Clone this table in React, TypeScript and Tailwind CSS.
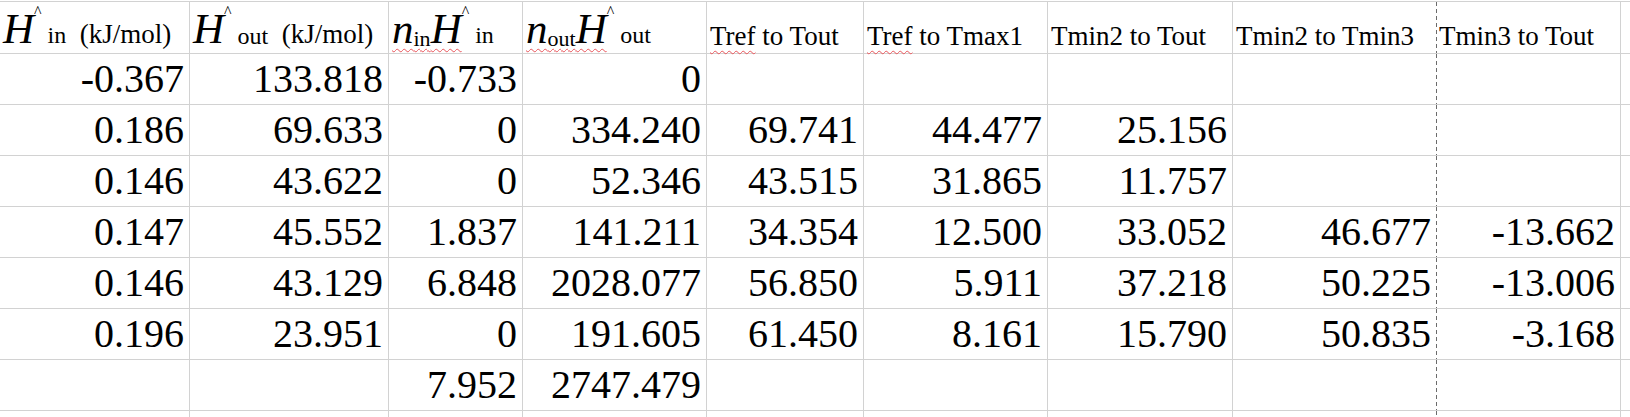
import React from "react";

const widths = [
  "w-[190px]",
  "w-[199px]",
  "w-[134px]",
  "w-[184px]",
  "w-[157px]",
  "w-[184px]",
  "w-[185px]",
  "w-[203px]",
  "w-[185px]",
];

const borderFor = (i: number) => {
  if (i === 7) return "";
  if (i === 8)
    return "border-r bg-[linear-gradient(to_bottom,#6b6b6b_4px,transparent_4px)] bg-[length:1px_7px] bg-repeat-y bg-[position:left_top]";
  return "border-r";
};

const data: string[][] = [
  ["-0.367", "133.818", "-0.733", "0", "", "", "", "", ""],
  ["0.186", "69.633", "0", "334.240", "69.741", "44.477", "25.156", "", ""],
  ["0.146", "43.622", "0", "52.346", "43.515", "31.865", "11.757", "", ""],
  ["0.147", "45.552", "1.837", "141.211", "34.354", "12.500", "33.052", "46.677", "-13.662"],
  ["0.146", "43.129", "6.848", "2028.077", "56.850", "5.911", "37.218", "50.225", "-13.006"],
  ["0.196", "23.951", "0", "191.605", "61.450", "8.161", "15.790", "50.835", "-3.168"],
  ["", "", "7.952", "2747.479", "", "", "", "", ""],
  ["", "", "", "", "", "", "", "", ""],
];

const wavy =
  "underline decoration-wavy decoration-[#e8555a] decoration-1 underline-offset-[5px]";

const Caret = () => (
  <span className="align-[26px] text-[16px] leading-none">^</span>
);

const BigH = () => <span className="italic text-[43px] leading-none">H</span>;
const BigN = () => <span className="italic text-[43px] leading-none">n</span>;

const headers: React.ReactNode[] = [
  <>
    <BigH />
    <Caret />
    <span className="text-[24px]"> in</span>
    <span className="text-[27px]">&nbsp; (kJ/mol)</span>
  </>,
  <>
    <BigH />
    <Caret />
    <span className="text-[24px] align-[-1px]"> out</span>
    <span className="text-[27px]">&nbsp; (kJ/mol)</span>
  </>,
  <>
    <span className={wavy}>
      <BigN />
      <span className="align-[-3px] text-[22px]">in</span>
      <BigH />
    </span>
    <Caret />
    <span className="text-[24px]"> in</span>
  </>,
  <>
    <span className={wavy}>
      <BigN />
      <span className="align-[-3px] text-[22px]">out</span>
      <BigH />
    </span>
    <Caret />
    <span className="text-[24px]"> out</span>
  </>,
  <>
    <span className={wavy}>Tref</span> to Tout
  </>,
  <>
    <span className={wavy}>Tref</span> to Tmax1
  </>,
  <>Tmin2 to Tout</>,
  <>Tmin2 to Tmin3</>,
  <>Tmin3 to Tout</>,
];

export default function App() {
  return (
    <div className="w-[1630px] h-[417px] overflow-hidden bg-white pt-[1px] font-['Liberation_Serif','Times_New_Roman',serif] text-black">
      <div className="flex border-t border-[#d2d2d2]">
        {headers.map((h, i) => (
          <div
            key={i}
            className={`${widths[i]} ${borderFor(i)} shrink-0 h-[52px] border-b border-[#d2d2d2] flex items-end pl-[3px] pb-[3px] whitespace-nowrap text-[27px] leading-none`}
          >
            <div className="leading-none">{h}</div>
          </div>
        ))}
        <div className="flex-1 h-[52px] border-b border-[#d2d2d2]" />
      </div>
      {data.map((row, r) => (
        <div key={r} className="flex">
          {row.map((v, i) => (
            <div
              key={i}
              className={`${widths[i]} ${borderFor(i)} shrink-0 h-[51px] border-b border-[#d2d2d2] flex items-center justify-end pr-[5px] text-[40px] leading-none whitespace-nowrap`}
            >
              {v}
            </div>
          ))}
          <div className="flex-1 h-[51px] border-b border-[#d2d2d2]" />
        </div>
      ))}
    </div>
  );
}
